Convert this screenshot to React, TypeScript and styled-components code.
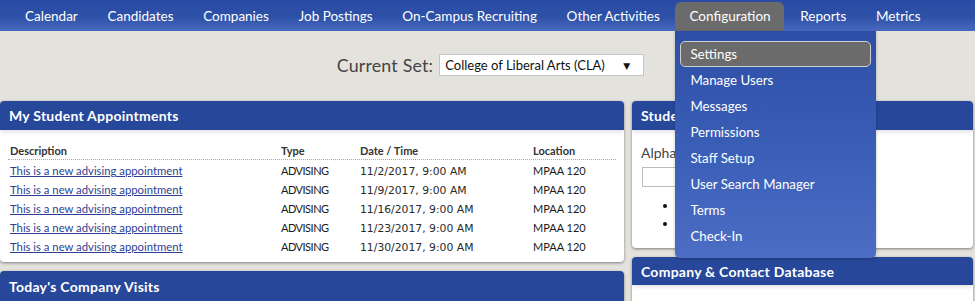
import React from 'react';
import styled, { createGlobalStyle } from 'styled-components';

const Global = createGlobalStyle`
  html, body { margin: 0; padding: 0; }
  body {
    background: #e3e2dc;
    font-family: Lato, "Open Sans", "DejaVu Sans", sans-serif;
    overflow: hidden;
  }
`;

const Page = styled.div`
  position: relative;
  width: 975px;
  height: 301px;
  overflow: hidden;
  background: #e3e2dc;
`;

const NavBar = styled.nav`
  height: 31px;
  background: linear-gradient(to bottom, #2a4ba4 0%, #2e51a8 55%, #4869bf 100%);
  display: flex;
  align-items: flex-end;
  padding-left: 11px;
  position: relative;
  z-index: 5;
`;

const NavItem = styled.div<{ $active?: boolean }>`
  position: relative;
  height: 29px;
  padding: 0 13px 1px 14px;
  box-sizing: border-box;
  margin-right: 2.7px;
  display: flex;
  align-items: center;
  color: #fff;
  font-size: 13.5px;
  white-space: nowrap;
  border-radius: 6px 6px 0 0;
  background: ${p => (p.$active ? '#6b6b6b' : 'transparent')};
`;

const Dropdown = styled.ul`
  position: absolute;
  top: 29px;
  left: 0;
  width: 201px;
  height: 227px;
  margin: 0;
  padding: 10px 0 0;
  list-style: none;
  box-sizing: border-box;
  background: linear-gradient(to bottom, #2c4ea6 0%, #3a5db6 50%, #4b6dc4 100%);
  border-radius: 0 0 5px 5px;
  box-shadow: 0 1px 3px rgba(0, 0, 0, 0.25);
`;

const DropItem = styled.li<{ $active?: boolean }>`
  height: 26px;
  margin: 0 5px;
  padding-left: 9px;
  box-sizing: border-box;
  display: flex;
  align-items: center;
  color: #fff;
  font-size: 13.3px;
  border-radius: 5px;
  border: 1px solid ${p => (p.$active ? '#cfcfcf' : 'transparent')};
  background: ${p => (p.$active ? '#6b6b6b' : 'transparent')};
`;

const SetRow = styled.div`
  height: 70px;
  padding: 0 0 2px 6px;
  box-sizing: border-box;
  display: flex;
  align-items: center;
  justify-content: center;
  gap: 6px;
`;

const SetLabel = styled.span`
  font-size: 17.8px;
  color: #454545;
  letter-spacing: 0.2px;
`;

const SetSelect = styled.div`
  width: 205px;
  height: 22px;
  box-sizing: border-box;
  border: 1px solid #c4c4c4;
  background: #fff;
  display: flex;
  align-items: center;
  justify-content: space-between;
  padding: 0 13px 0 5px;
  font-size: 13px;
  color: #111;
`;

const Arrow = styled.span`
  font-size: 9px;
  color: #111;
`;

const Columns = styled.div`
  display: grid;
  grid-template-columns: 624px 341px;
  column-gap: 8px;
  align-items: start;
`;

const Column = styled.div`
  display: flex;
  flex-direction: column;
  gap: 9px;
`;

const Panel = styled.section`
  background: #fff;
  border-radius: 4px;
  box-shadow: 0 1px 3px rgba(0, 0, 0, 0.45);
  overflow: hidden;
`;

const PanelHeader = styled.h2<{ $h?: number }>`
  margin: 0;
  height: ${p => p.$h ?? 29}px;
  background: #27479a;
  color: #fff;
  font-size: 14px;
  letter-spacing: 0.25px;
  font-weight: 700;
  padding-left: 9px;
  display: flex;
  align-items: center;
  white-space: nowrap;
  box-shadow: 0 2px 4px rgba(0, 0, 0, 0.12);
  position: relative;
`;

const PanelBody = styled.div<{ $h: number }>`
  height: ${p => p.$h}px;
  box-sizing: border-box;
`;

const TableBody = styled.div`
  padding: 11px 8px 0;
`;

const Row = styled.div<{ $head?: boolean }>`
  display: grid;
  grid-template-columns: 271px 79px 173px 1fr;
  height: ${p => (p.$head ? 18 : 19)}px;
  align-items: center;
  font-size: 11px;
  color: ${p => (p.$head ? '#333' : '#1a1a1a')};
  font-weight: ${p => (p.$head ? 700 : 400)};
  border-bottom: ${p => (p.$head ? '1px dotted #aaa' : 'none')};
  margin-bottom: ${p => (p.$head ? 1 : 0)}px;
`;

const Cell = styled.span<{ $kind?: 'type' | 'date' }>`
  padding-left: 2px;
  white-space: nowrap;
  font-family: ${p => (p.$kind === 'date' ? '"DejaVu Sans", sans-serif' : 'inherit')};
  font-size: ${p => (p.$kind === 'date' ? '10.8px' : 'inherit')};
  color: ${p => (p.$kind === 'date' ? '#2a2a2a' : 'inherit')};
  padding-top: ${p => (p.$kind === 'date' ? '1px' : '0')};
  letter-spacing: ${p => (p.$kind === 'type' ? '-0.5px' : 'normal')};
`;

const LinkCell = styled.a`
  padding-left: 2px;
  color: #2d3f94;
  font-size: 11.3px;
  text-decoration: underline;
  white-space: nowrap;
`;

const SearchBody = styled.div`
  padding: 14px 9px 0;
`;

const SearchLabel = styled.div`
  font-size: 14px;
  color: #444;
  margin-bottom: 6px;
`;

const SearchInput = styled.div`
  width: 200px;
  height: 20px;
  margin-left: 1px;
  box-sizing: border-box;
  border: 1px solid #bbb;
  background: #fff;
`;

const Bullets = styled.ul`
  margin: 9px 0 0;
  padding-left: 37px;
  font-size: 13px;
  line-height: 18px;
  color: #111;
`;

const appointments = [
  '11/2/2017, 9:00 AM',
  '11/9/2017, 9:00 AM',
  '11/16/2017, 9:00 AM',
  '11/23/2017, 9:00 AM',
  '11/30/2017, 9:00 AM',
];

const navItems = [
  'Calendar',
  'Candidates',
  'Companies',
  'Job Postings',
  'On-Campus Recruiting',
  'Other Activities',
  'Configuration',
  'Reports',
  'Metrics',
];

const menu = [
  'Settings',
  'Manage Users',
  'Messages',
  'Permissions',
  'Staff Setup',
  'User Search Manager',
  'Terms',
  'Check-In',
];

export default function App() {
  return (
    <Page>
      <Global />
      <NavBar>
        {navItems.map(n => (
          <NavItem key={n} $active={n === 'Configuration'}>
            {n}
            {n === 'Configuration' && (
              <Dropdown>
                {menu.map(m => (
                  <DropItem key={m} $active={m === 'Settings'}>
                    {m}
                  </DropItem>
                ))}
              </Dropdown>
            )}
          </NavItem>
        ))}
      </NavBar>
      <SetRow>
        <SetLabel>Current Set:</SetLabel>
        <SetSelect>
          <span>College of Liberal Arts (CLA)</span>
          <Arrow>▼</Arrow>
        </SetSelect>
      </SetRow>
      <Columns>
        <Column>
          <Panel>
            <PanelHeader>My Student Appointments</PanelHeader>
            <PanelBody $h={132}>
              <TableBody>
                <Row $head>
                  <Cell>Description</Cell>
                  <Cell>Type</Cell>
                  <Cell>Date / Time</Cell>
                  <Cell>Location</Cell>
                </Row>
                {appointments.map(d => (
                  <Row key={d}>
                    <LinkCell href="#">This is a new advising appointment</LinkCell>
                    <Cell $kind="type">ADVISING</Cell>
                    <Cell $kind="date">{d}</Cell>
                    <Cell>MPAA 120</Cell>
                  </Row>
                ))}
              </TableBody>
            </PanelBody>
          </Panel>
          <Panel>
            <PanelHeader $h={30}>Today's Company Visits</PanelHeader>
            <PanelBody $h={40} />
          </Panel>
        </Column>
        <Column>
          <Panel>
            <PanelHeader>Student Search</PanelHeader>
            <PanelBody $h={118}>
              <SearchBody>
                <SearchLabel>Alphabetical</SearchLabel>
                <SearchInput />
                <Bullets>
                  <li>Search</li>
                  <li>Browse</li>
                </Bullets>
              </SearchBody>
            </PanelBody>
          </Panel>
          <Panel>
            <PanelHeader $h={28}>Company &amp; Contact Database</PanelHeader>
            <PanelBody $h={40} />
          </Panel>
        </Column>
      </Columns>
    </Page>
  );
}
